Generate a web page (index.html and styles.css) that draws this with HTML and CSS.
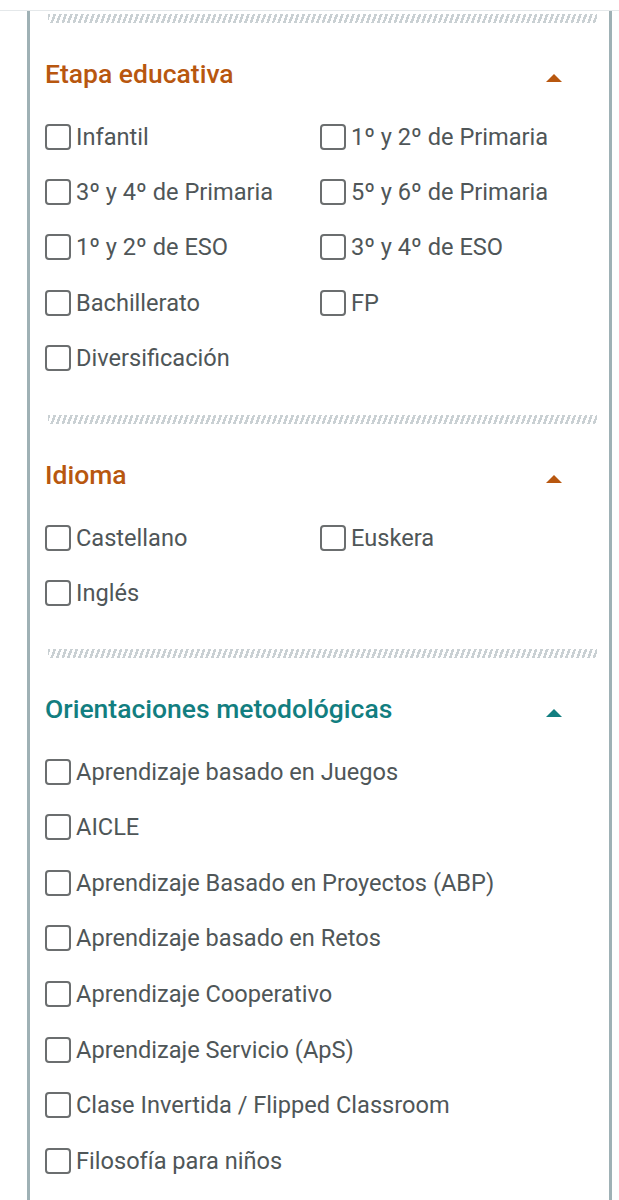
FILE: index.html
```html
<!DOCTYPE html>
<html lang="es">
<head>
<meta charset="utf-8">
<title>Filtros</title>
<link rel="stylesheet" href="styles.css">
</head>
<body>
<div class="topbar"></div>
<div class="panel">
  <section class="group first">
    <div class="hatch"></div>
    <div class="group-head orange">
      <h2>Etapa educativa</h2>
      <span class="caret"></span>
    </div>
    <div class="options two">
      <label class="opt"><span class="box"></span>Infantil</label>
      <label class="opt"><span class="box"></span>1º y 2º de Primaria</label>
      <label class="opt"><span class="box"></span>3º y 4º de Primaria</label>
      <label class="opt"><span class="box"></span>5º y 6º de Primaria</label>
      <label class="opt"><span class="box"></span>1º y 2º de ESO</label>
      <label class="opt"><span class="box"></span>3º y 4º de ESO</label>
      <label class="opt"><span class="box"></span>Bachillerato</label>
      <label class="opt"><span class="box"></span>FP</label>
      <label class="opt"><span class="box"></span>Diversificación</label>
    </div>
  </section>
  <section class="group">
    <div class="hatch"></div>
    <div class="group-head orange">
      <h2>Idioma</h2>
      <span class="caret"></span>
    </div>
    <div class="options two">
      <label class="opt"><span class="box"></span>Castellano</label>
      <label class="opt"><span class="box"></span>Euskera</label>
      <label class="opt"><span class="box"></span>Inglés</label>
    </div>
  </section>
  <section class="group">
    <div class="hatch"></div>
    <div class="group-head teal">
      <h2>Orientaciones metodológicas</h2>
      <span class="caret"></span>
    </div>
    <div class="options one">
      <label class="opt"><span class="box"></span>Aprendizaje basado en Juegos</label>
      <label class="opt"><span class="box"></span>AICLE</label>
      <label class="opt"><span class="box"></span>Aprendizaje Basado en Proyectos (ABP)</label>
      <label class="opt"><span class="box"></span>Aprendizaje basado en Retos</label>
      <label class="opt"><span class="box"></span>Aprendizaje Cooperativo</label>
      <label class="opt"><span class="box"></span>Aprendizaje Servicio (ApS)</label>
      <label class="opt"><span class="box"></span>Clase Invertida / Flipped Classroom</label>
      <label class="opt"><span class="box"></span>Filosofía para niños</label>
    </div>
  </section>
</div>
</body>
</html>
```
FILE: styles.css
```css
html, body {
  margin: 0;
  padding: 0;
  background: #ffffff;
}
body {
  font-family: Roboto, "Noto Sans", "Liberation Sans", sans-serif;
  color: #4f5658;
  overflow: hidden;
}
.topbar {
  height: 10px;
  border-bottom: 1px solid #e4e8ea;
}
.panel {
  margin-left: 27px;
  width: 552px;
  border-left: 3px solid #9fb1b5;
  border-right: 3px solid #9fb1b5;
  padding: 3px 12px 0 15px;
  min-height: 1300px;
}
.group {
  padding-bottom: 28px;
}
.group.first {
  padding-bottom: 30px;
}
.hatch {
  height: 9px;
  margin-left: 3px;
  background: repeating-linear-gradient(110deg, #c9d0d3 0 2.5px, #ffffff 2.5px 5.2px);
}
.group-head {
  display: flex;
  align-items: center;
  justify-content: space-between;
  height: 30px;
  margin-top: 36px;
  margin-bottom: 20px;
}
.group-head h2 {
  margin: 0;
  font-size: 26.5px;
  font-weight: 500;
  line-height: 30px;
}
.orange { color: #b8570f; }
.teal { color: #127e80; }
.caret {
  width: 0;
  height: 0;
  border-left: 8.5px solid transparent;
  border-right: 8.5px solid transparent;
  border-bottom: 8px solid currentColor;
  margin-right: 35px;
  margin-top: 8px;
}
.options {
  display: grid;
  grid-auto-rows: 55.3px;
}
.options.two {
  grid-template-columns: 275px 1fr;
}
.options.one {
  grid-template-columns: 1fr;
  grid-auto-rows: 55.55px;
}
.opt {
  display: flex;
  align-items: center;
  font-size: 23.6px;
  line-height: 30px;
  white-space: nowrap;
}
.box {
  flex: none;
  width: 22px;
  height: 22px;
  border: 2px solid #6b6e6f;
  border-radius: 4px;
  margin-right: 5px;
  box-sizing: content-box;
}
```
